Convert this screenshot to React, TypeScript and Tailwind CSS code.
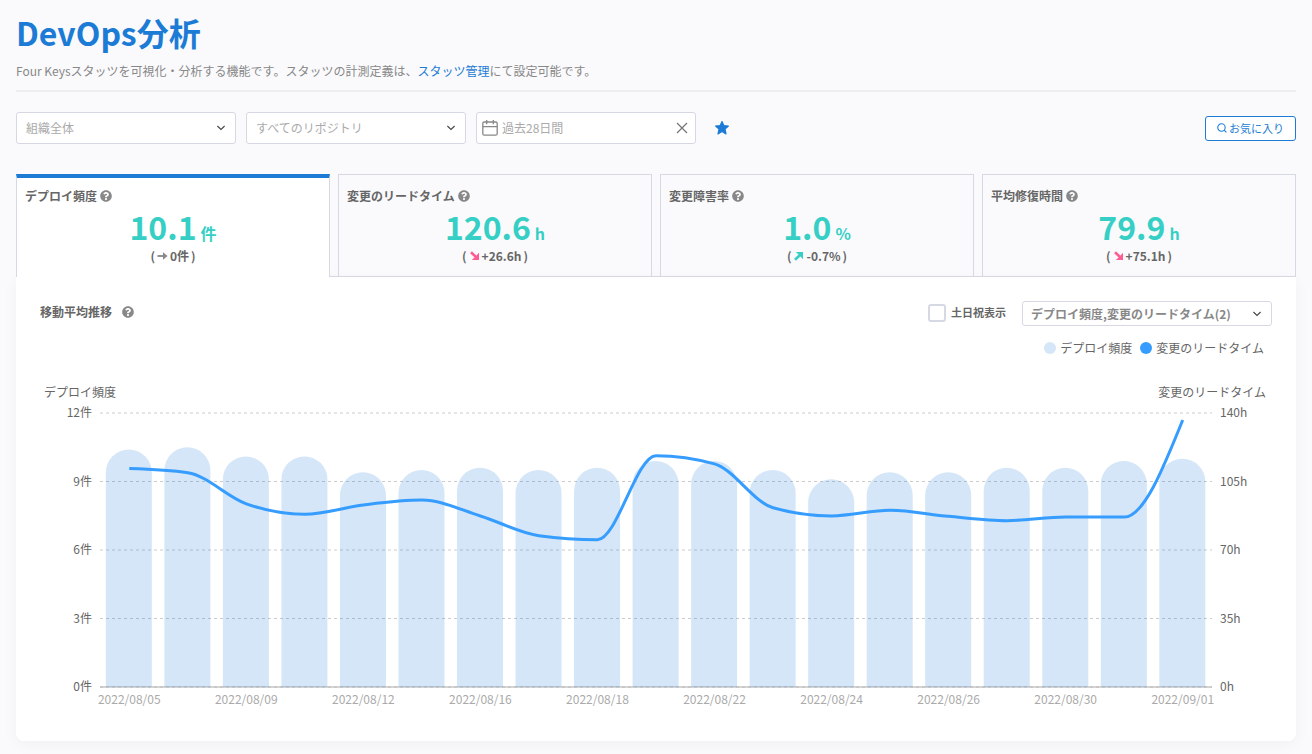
import { useState } from "react";
import type { ReactNode } from "react";
import { FaQuestionCircle } from "react-icons/fa";

type Trend = "flat" | "worse" | "better";

interface Metric {
  name: string;
  value: string;
  unit: string;
  diff: string;
  trend: Trend;
}

const METRICS: Metric[] = [
  { name: "デプロイ頻度", value: "10.1", unit: "件", diff: "0件", trend: "flat" },
  { name: "変更のリードタイム", value: "120.6", unit: "h", diff: "+26.6h", trend: "worse" },
  { name: "変更障害率", value: "1.0", unit: "%", diff: "-0.7%", trend: "better" },
  { name: "平均修復時間", value: "79.9", unit: "h", diff: "+75.1h", trend: "worse" },
];

const DEPLOYS = [10.4, 10.5, 10.1, 10.1, 9.4, 9.5, 9.6, 9.5, 9.6, 9.9, 9.9, 9.5, 9.1, 9.4, 9.4, 9.6, 9.6, 9.9, 10];
const LEAD_TIMES = [
  111.6, 109.5, 93.6, 88.3, 93, 95.5, 87.4, 77.3, 75.3, 118.2, 114, 91.6, 87.4, 90.3, 87.2, 85, 86.9, 86.8, 136.4,
];
const DATES = [
  "2022/08/05", "2022/08/09", "2022/08/12", "2022/08/16", "2022/08/18",
  "2022/08/22", "2022/08/24", "2022/08/26", "2022/08/30", "2022/09/01",
];

const PLOT = { left: 60, right: 1172, top: 48, bottom: 322 };
const BAND = (PLOT.right - PLOT.left) / DEPLOYS.length;
const BAR = 46;

const centre = (i: number) => PLOT.left + BAND * (i + 0.5);
const scaleY = (v: number, max: number) => PLOT.bottom - (v / max) * (PLOT.bottom - PLOT.top);

/** Cubic path through the points that never overshoots them. */
function monotonePath(points: [number, number][]) {
  const n = points.length;
  const slope = (i: number) =>
    (points[i + 1][1] - points[i][1]) / (points[i + 1][0] - points[i][0]);
  const tangents = points.map((_, i) => {
    if (i === 0 || i === n - 1) return 0;
    const a = slope(i - 1);
    const b = slope(i);
    const p = (a + b) / 2;
    return (Math.sign(a) + Math.sign(b)) * Math.min(Math.abs(a), Math.abs(b), 0.5 * Math.abs(p)) || 0;
  });
  tangents[0] = (3 * slope(0) - tangents[1]) / 2;
  tangents[n - 1] = (3 * slope(n - 2) - tangents[n - 2]) / 2;
  let d = `M${points[0][0]},${points[0][1]}`;
  for (let i = 1; i < n; i++) {
    const [x0, y0] = points[i - 1];
    const [x1, y1] = points[i];
    const dx = (x1 - x0) / 3;
    d += `C${x0 + dx},${y0 + dx * tangents[i - 1]},${x1 - dx},${y1 - dx * tangents[i]},${x1},${y1}`;
  }
  return d;
}

function barPath(i: number, value: number) {
  const x = PLOT.left + BAND * (i + 0.1);
  const y = scaleY(value, 12);
  const r = BAR / 2;
  return `M${x},${y + r}A${r},${r},0,0,1,${x + BAR},${y + r}V${PLOT.bottom}H${x}Z`;
}

function Chart() {
  const line = monotonePath(LEAD_TIMES.map((v, i) => [centre(i), scaleY(v, 140)]));
  return (
    <svg viewBox="0 0 1232 352" className="block w-full text-xs" role="img" aria-label="移動平均推移">
      <g fill="#666">
        <text x="4" y="32">デプロイ頻度</text>
        <text x="1226" y="32" textAnchor="end">変更のリードタイム</text>
      </g>
      {[0, 1, 2, 3, 4].map((k) => {
        const y = scaleY(k, 4);
        return (
          <g key={k} fill="#666">
            <line x1={PLOT.left} x2={PLOT.right} y1={y} y2={y} stroke="#ccc" strokeDasharray="3 3" />
            <text x="52" y={y + 4} textAnchor="end">{k * 3}件</text>
            <text x="1180" y={y + 4}>{k * 35}h</text>
          </g>
        );
      })}
      <line x1={PLOT.left} x2={PLOT.right} y1={PLOT.bottom} y2={PLOT.bottom} stroke="#aaa" />
      <g fill="#1c7cd5" fillOpacity="0.19">
        {DEPLOYS.map((v, i) => (
          <path key={i} d={barPath(i, v)} />
        ))}
      </g>
      <path d={line} fill="none" stroke="#369dff" strokeWidth="3" />
      <g fill="#aaa" textAnchor="middle">
        {DATES.map((date, i) => (
          <text key={date} x={centre(i * 2)} y="339">{date}</text>
        ))}
      </g>
    </svg>
  );
}

function Chevron() {
  return (
    <svg viewBox="0 0 10 6" className="pointer-events-none absolute right-[10px] top-1/2 h-[6px] w-[10px] -translate-y-1/2" fill="none" stroke="#444" strokeWidth="1.1">
      <path d="M1.4 1 5 4.4 8.6 1" />
    </svg>
  );
}

function Dropdown({ label, children }: { label: string; children: ReactNode }) {
  return (
    <div className="relative w-[220px]">
      <select aria-label={label} className="h-8 w-full appearance-none rounded-[3px] border border-[#d6d8e4] bg-white px-[9px] text-xs text-[#aaa]">
        {children}
      </select>
      <Chevron />
    </div>
  );
}

function TrendArrow({ trend }: { trend: Trend }) {
  if (trend === "flat") {
    return (
      <svg viewBox="0 0 12 10" className="h-[10px] w-[11px]" fill="none" stroke="#888" strokeWidth="2">
        <path d="M0.5 5H9" />
        <path d="M6.5 1 11.5 5 6.5 9Z" fill="#888" stroke="none" />
      </svg>
    );
  }
  return trend === "worse" ? (
    <svg viewBox="0 0 10 10" className="ml-px h-[10px] w-[10px]">
      <path d="M1 1.2 6 6" stroke="#ff5c93" strokeWidth="2.6" />
      <path d="M9 1.8V9H1.8L4.300 6.800 6.500 4.600Z" fill="#ff5c93" />
    </svg>
  ) : (
    <svg viewBox="0 0 10 10" className="ml-px h-[10px] w-[10px]">
      <path d="M1 8.8 6 4" stroke="#36cfc5" strokeWidth="2.6" />
      <path d="M9 8.2V1H1.8L4.300 3.200 6.500 5.400Z" fill="#36cfc5" />
    </svg>
  );
}

function MetricTab({ metric, active, onSelect }: { metric: Metric; active: boolean; onSelect: () => void }) {
  const frame = active
    ? "border-x border-t-4 border-b-0 border-x-[#d6d8e4] border-t-[#1c7cd5] bg-white pt-2"
    : "border border-[#d6d8e4] pt-[11px]";
  return (
    <button type="button" role="tab" aria-selected={active} onClick={onSelect} className={`flex h-[103px] flex-col gap-[2px] px-2 font-bold text-[#666] ${frame}`}>
      <span className="flex items-center gap-[3px] text-xs leading-5">
        {metric.name}
        <FaQuestionCircle className="h-3 w-3 text-[#888]" />
      </span>
      <span className="flex items-baseline justify-center gap-1 self-stretch leading-9 text-[#36cfc5]">
        <span className="text-[32px] leading-9">{metric.value}</span>
        <span className="text-base leading-5">{metric.unit}</span>
      </span>
      <span className="flex items-center justify-center gap-[2px] self-stretch text-xs leading-5">
        <span>(</span>
        <TrendArrow trend={metric.trend} />
        <span>{metric.diff}</span>
        <span>)</span>
      </span>
    </button>
  );
}

export default function App() {
  const [tab, setTab] = useState(0);
  const [showHolidays, setShowHolidays] = useState(false);
  return (
    <div className="min-h-screen bg-[#fafafc] px-4 pb-3 pt-2 font-['Noto_Sans_CJK_JP',sans-serif] text-[#666]">
      <header className="border-b-2 border-[#eee] pb-[10px]">
        <h1 className="text-[32px] font-bold leading-[48px] text-[#1c7cd5]">DevOps分析</h1>
        <p className="mt-[6px] text-xs leading-[18px] text-[#888]">
          Four Keysスタッツを可視化・分析する機能です。スタッツの計測定義は、
          <a href="#stats" className="text-[#1c7cd5]">スタッツ管理</a>
          にて設定可能です。
        </p>
      </header>

      <div className="mt-5 flex items-center gap-[10px]">
        <Dropdown label="組織">
          <option>組織全体</option>
        </Dropdown>
        <Dropdown label="リポジトリ">
          <option>すべてのリポジトリ</option>
        </Dropdown>
        <div className="flex h-8 w-[220px] items-center gap-1 rounded-[3px] border border-[#d6d8e4] bg-white pl-[5px] pr-[7px]">
          <svg viewBox="0 0 16 16" className="h-4 w-4 shrink-0" fill="none" stroke="#888" strokeWidth="1.3">
            <rect x="0.8" y="2" width="14.4" height="13.2" rx="1.5" />
            <path d="M0.8 6.6H15.2M4.7 0V4.3M11.3 0V4.3" />
          </svg>
          <input type="text" aria-label="期間" defaultValue="過去28日間" className="min-w-0 flex-1 bg-transparent text-xs text-[#aaa] outline-none" />
          <button type="button" aria-label="クリア">
            <svg viewBox="0 0 12 12" className="h-3 w-3" fill="none" stroke="#777" strokeWidth="1.3">
              <path d="M1 1 11 11M11 1 1 11" />
            </svg>
          </button>
        </div>
        <button type="button" aria-label="お気に入りに追加" className="ml-2">
          <svg viewBox="0 0 16 16" className="h-4 w-4" fill="#1c7cd5" stroke="#1c7cd5" strokeWidth="1.2" strokeLinejoin="round">
            <path d="M8 1.6 9.8 5.6 14.4 6 11 9.1 12 13.9 8 11.6 4 13.9 5 9.1 1.6 6 6.2 5.6Z" />
          </svg>
        </button>
        <button type="button" className="ml-auto flex h-[25px] items-center gap-[2px] rounded-[3px] border border-[#1c7cd5] bg-white px-[11px] text-[11px] text-[#1c7cd5]">
          <svg viewBox="0 0 11 11" className="h-[10px] w-[10px]" fill="none" stroke="#1c7cd5" strokeWidth="1.2">
            <circle cx="4.9" cy="4.9" r="4.1" />
            <path d="M7.8 7.8 10.4 10.4" />
          </svg>
          お気に入り
        </button>
      </div>

      <div role="tablist" className="mt-[30px] grid grid-cols-4 gap-2 bg-[linear-gradient(#d6d8e4,#d6d8e4)] bg-[length:100%_1px] bg-bottom bg-no-repeat">
        {METRICS.map((m, i) => (
          <MetricTab key={m.name} metric={m} active={tab === i} onSelect={() => setTab(i)} />
        ))}
      </div>

      <main className="rounded-b-lg bg-white p-6 shadow-[0_4px_16px_rgba(0,0,0,0.04)]">
        <div className="flex items-center">
          <h2 className="flex items-center gap-[10px] pb-1 text-xs font-bold leading-5">
            移動平均推移
            <FaQuestionCircle className="h-3 w-3 text-[#888]" />
          </h2>
          <label className="ml-auto mr-4 flex items-center gap-[5px] pb-[2px] text-[11px] font-bold">
            <input
              type="checkbox"
              checked={showHolidays}
              onChange={(e) => setShowHolidays(e.target.checked)}
              className="h-[18px] w-[18px] appearance-none rounded-[3px] border-2 border-[#d6d8e4] bg-white checked:bg-[#1c7cd5]"
            />
            土日祝表示
          </label>
          <div className="relative w-[250px]">
            <select aria-label="表示する指標" className="block h-[25px] w-full appearance-none rounded-[3px] border border-[#d6d8e4] bg-white px-2 text-xs font-bold text-[#888]">
              <option>デプロイ頻度,変更のリードタイム(2)</option>
            </select>
            <Chevron />
          </div>
        </div>
        <ul className="mt-3 flex justify-end gap-2 pr-2 text-xs leading-5">
          <li className="flex items-center gap-1">
            <span className="h-3 w-3 rounded-full bg-[#d4e6f7]" />
            デプロイ頻度
          </li>
          <li className="flex items-center gap-1">
            <span className="h-3 w-3 rounded-full bg-[#369dff]" />
            変更のリードタイム
          </li>
        </ul>
        <div className="mt-[7px]">
          <Chart />
        </div>
      </main>
    </div>
  );
}
